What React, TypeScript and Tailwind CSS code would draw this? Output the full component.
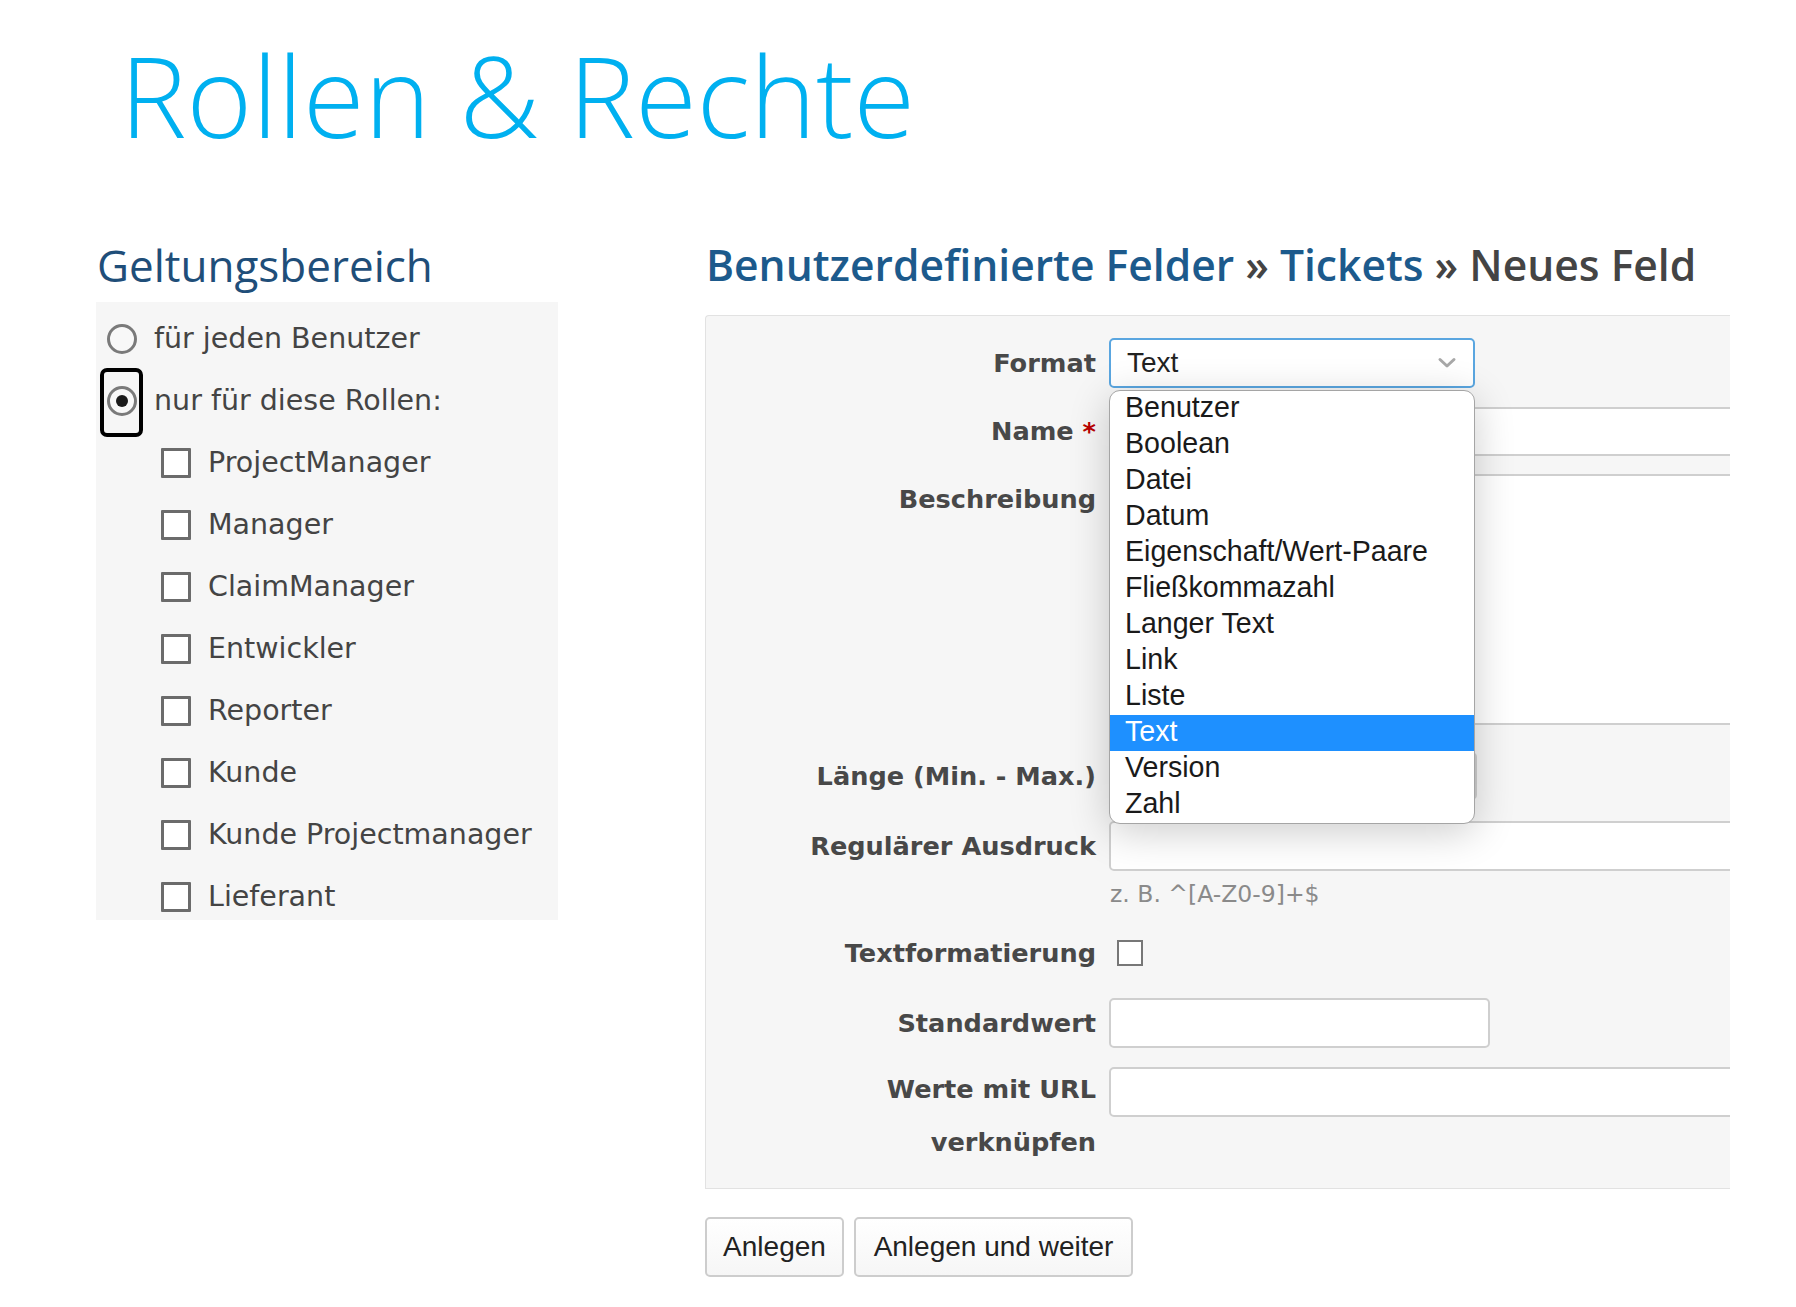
const roles = [
  "ProjectManager",
  "Manager",
  "ClaimManager",
  "Entwickler",
  "Reporter",
  "Kunde",
  "Kunde Projectmanager",
  "Lieferant",
];

const formats = [
  "Benutzer",
  "Boolean",
  "Datei",
  "Datum",
  "Eigenschaft/Wert-Paare",
  "Fließkommazahl",
  "Langer Text",
  "Link",
  "Liste",
  "Text",
  "Version",
  "Zahl",
];

function Radio({ checked }: { checked?: boolean }) {
  return (
    <span className="relative flex h-[30px] w-[30px] shrink-0 items-center justify-center rounded-full border-[3px] border-[#7a7a7a] bg-[#f8f8f8]">
      {checked && <span className="h-[12px] w-[12px] rounded-full bg-[#1a1a1a]" />}
      {checked && (
        <span className="absolute left-[-10px] top-[-21px] h-[69px] w-[43px] rounded-[7px] border-[4px] border-black" />
      )}
    </span>
  );
}

function Label({ children }: { children: React.ReactNode }) {
  return (
    <div className="w-[390px] shrink-0 text-right text-[25.6px] font-bold leading-[30px] text-[#484848]">
      {children}
    </div>
  );
}

const inputCls = "rounded-[5px] border-2 border-[#cfcfcf] bg-white";

export default function App() {
  return (
    <div className="relative h-[1307px] w-[1796px] overflow-hidden bg-white">
      <h1
        className="ml-[120px] mt-[39px] text-[112px] font-light leading-none text-[#00b0f0]"
        style={{ fontFamily: '"Open Sans", sans-serif' }}
      >
        Rollen &amp; Rechte
      </h1>

      <div className="mt-[92px] flex items-start">
        {/* Geltungsbereich */}
        <div className="ml-[96px] w-[462px] shrink-0">
          <h2
            className="ml-[1px] text-[44px] leading-none text-[#1f4e79]"
            style={{ fontFamily: '"Open Sans", sans-serif' }}
          >
            Geltungsbereich
          </h2>
          <div
            className="mt-[15px] h-[618px] bg-[#f6f6f6] pt-[6px] text-[28.5px] text-[#444]"
            style={{ fontFamily: '"DejaVu Sans", Verdana, sans-serif' }}
          >
            <div className="flex h-[62px] items-center gap-[17px] pl-[11px]">
              <Radio />
              <span>für jeden Benutzer</span>
            </div>
            <div className="flex h-[62px] items-center gap-[17px] pl-[11px]">
              <Radio checked />
              <span>nur für diese Rollen:</span>
            </div>
            {roles.map((r) => (
              <div key={r} className="flex h-[62px] items-center gap-[17px] pl-[65px]">
                <span className="h-[30px] w-[30px] shrink-0 rounded-[1px] border-[3px] border-[#6b6b6b] bg-white" />
                <span>{r}</span>
              </div>
            ))}
          </div>
        </div>

        {/* Neues Feld */}
        <div className="ml-[147px] w-[1025px] shrink-0">
          <h2
            className="ml-[1px] whitespace-nowrap text-[42.6px] font-semibold leading-none text-[#1c5a8c]"
            style={{ fontFamily: '"Open Sans", sans-serif' }}
          >
            Benutzerdefinierte Felder <span className="text-[#444]">»</span> Tickets{" "}
            <span className="text-[#444]">» Neues Feld</span>
          </h2>

          <div
            className="mt-[29px] flex flex-col overflow-hidden rounded-tl-[4px] border-b border-l border-t border-[#e2e2e2] bg-[#f6f6f6] pb-[19px]"
            style={{ fontFamily: '"DejaVu Sans", Verdana, sans-serif' }}
          >
            <div className="mt-[22px] flex items-center gap-[13px]">
              <Label>Format</Label>
              <div className="relative z-10">
                <div
                  className="flex h-[50px] w-[366px] items-center justify-between rounded-[5px] border-2 border-[#5aa6e0] bg-white pl-[16px] pr-[16px] text-[28px] text-[#222]"
                  style={{ fontFamily: '"Liberation Sans", Arial, sans-serif' }}
                >
                  <span>Text</span>
                  <svg width="20" height="12" viewBox="0 0 20 12" fill="none">
                    <path d="M3 2.5 L10 9 L17 2.5" stroke="#a8a8a8" strokeWidth="3" strokeLinecap="round" strokeLinejoin="round" />
                  </svg>
                </div>
                <div
                  className="absolute left-0 top-[52px] w-[366px] overflow-hidden rounded-[11px] border border-[#a5a5a5] bg-white text-[28.6px] text-[#1a1a1a] shadow-[0_8px_40px_rgba(0,0,0,0.2)]"
                  style={{ fontFamily: '"Liberation Sans", Arial, sans-serif' }}
                >
                  {formats.map((f) => (
                    <div
                      key={f}
                      className={
                        f === "Text"
                          ? "h-[36px] bg-[#1e90ff] pl-[15px] leading-[33px] text-white"
                          : "h-[36px] pl-[15px] leading-[33px]"
                      }
                    >
                      {f}
                    </div>
                  ))}
                </div>
              </div>
            </div>

            <div className="mt-[19px] flex items-center gap-[13px]">
              <Label>
                Name <span className="text-[#bb0000]">*</span>
              </Label>
              <div className={`${inputCls} mr-[-20px] h-[49px] flex-1`} />
            </div>

            <div className="mt-[18px] flex items-start gap-[13px]">
              <div className="mt-[10px]">
                <Label>Beschreibung</Label>
              </div>
              <div className={`${inputCls} mr-[-20px] h-[251px] flex-1`} />
            </div>

            <div className="mt-[27px] flex items-center gap-[13px]">
              <Label>Länge (Min. - Max.)</Label>
              <div className={`${inputCls} h-[48px] w-[368px]`} />
            </div>

            <div className="mt-[21px] flex items-center gap-[13px]">
              <Label>Regulärer Ausdruck</Label>
              <div className={`${inputCls} mr-[-20px] h-[50px] flex-1`} />
            </div>

            <div className="ml-[404px] mt-[10px] text-[23.5px] leading-[26px] text-[#8a8a8a]">
              z. B. ^[A-Z0-9]+$
            </div>

            <div className="mt-[31px] flex items-center gap-[13px]">
              <Label>Textformatierung</Label>
              <span className="ml-[8px] h-[26px] w-[26px] border-2 border-[#777] bg-white" />
            </div>

            <div className="mt-[30px] flex items-center gap-[13px]">
              <Label>Standardwert</Label>
              <div className={`${inputCls} h-[50px] w-[381px]`} />
            </div>

            <div className="mt-[15px] flex items-start gap-[13px]">
              <div className="w-[390px] shrink-0 text-right text-[25.6px] font-bold leading-[53px] text-[#484848]">
                Werte mit URL
                <br />
                verknüpfen
              </div>
              <div className={`${inputCls} mr-[-20px] mt-[4px] h-[50px] flex-1`} />
            </div>
          </div>

          <div
            className="mt-[28px] flex gap-[10px] text-[28px] text-[#222]"
            style={{ fontFamily: '"Liberation Sans", Arial, sans-serif' }}
          >
            <button className="h-[60px] w-[139px] rounded-[5px] border-2 border-[#cdcdcd] bg-gradient-to-b from-white to-[#f6f6f6]">
              Anlegen
            </button>
            <button className="h-[60px] w-[279px] rounded-[5px] border-2 border-[#cdcdcd] bg-gradient-to-b from-white to-[#f6f6f6]">
              Anlegen und weiter
            </button>
          </div>
        </div>
      </div>
    </div>
  );
}
